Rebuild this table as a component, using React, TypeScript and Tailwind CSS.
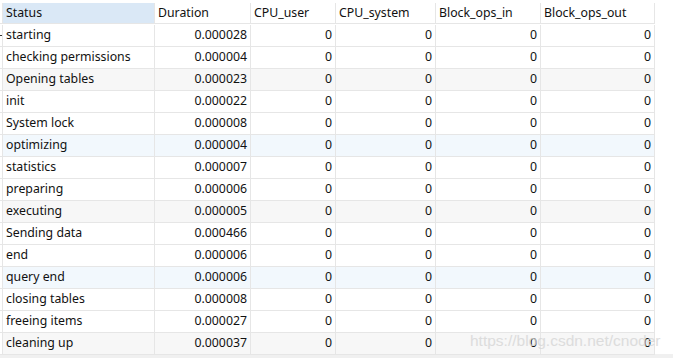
import React from 'react';

type Row = { status: string; duration: string; shade?: 'gray' | 'blue' };

const rows: Row[] = [
  { status: 'starting', duration: '0.000028' },
  { status: 'checking permissions', duration: '0.000004' },
  { status: 'Opening tables', duration: '0.000023', shade: 'gray' },
  { status: 'init', duration: '0.000022' },
  { status: 'System lock', duration: '0.000008' },
  { status: 'optimizing', duration: '0.000004', shade: 'blue' },
  { status: 'statistics', duration: '0.000007' },
  { status: 'preparing', duration: '0.000006' },
  { status: 'executing', duration: '0.000005', shade: 'gray' },
  { status: 'Sending data', duration: '0.000466' },
  { status: 'end', duration: '0.000006' },
  { status: 'query end', duration: '0.000006', shade: 'blue' },
  { status: 'closing tables', duration: '0.000008' },
  { status: 'freeing items', duration: '0.000027' },
  { status: 'cleaning up', duration: '0.000037', shade: 'gray' },
];

const headers = ['Duration', 'CPU_user', 'CPU_system', 'Block_ops_in', 'Block_ops_out'];

const cell = 'border-r border-b border-[#e6e6e6] px-[3px] flex items-center whitespace-nowrap overflow-hidden';

export default function App() {
  return (
    <div
      className="relative w-[673px] h-[358px] bg-white text-[12.3px] text-[#111] overflow-hidden"
      style={{ fontFamily: '"Noto Sans", "Noto Sans CJK SC", sans-serif' }}
    >
      <div className="pt-[3px] h-[354px]">
        <div className="grid grid-cols-[3px_152px_96px_85px_100px_105px_114px] auto-rows-[22px] w-[655px] [&>div]:box-border">
          {/* header */}
          <div className="border-r border-b border-[#e6e6e6] h-[21px]" />
          <div className={`${cell} h-[21px] bg-[#dae8f6]`}>Status</div>
          {headers.map((h) => (
            <div key={h} className={`${cell} h-[21px]`}>{h}</div>
          ))}

          {rows.map((r, i) => {
            const bg = r.shade === 'gray' ? 'bg-[#f7f7f7]' : r.shade === 'blue' ? 'bg-[#f2f8fd]' : 'bg-white';
            return (
              <React.Fragment key={r.status}>
                <div className="border-r border-b border-[#e6e6e6] flex items-center">
                  {i === 0 && <div className="w-[2px] h-[1px] bg-[#333]" />}
                </div>
                <div className={`${cell} ${bg}`}>{r.status}</div>
                <div className={`${cell} ${bg} justify-end`}>{r.duration}</div>
                <div className={`${cell} ${bg} justify-end`}>0</div>
                <div className={`${cell} ${bg} justify-end`}>0</div>
                <div className={`${cell} ${bg} justify-end`}>0</div>
                <div className={`${cell} ${bg} justify-end`}>0</div>
              </React.Fragment>
            );
          })}
        </div>
      </div>
      <div className="h-[4px] bg-[#f0f0f0]" />

      <div
        className="pointer-events-none absolute left-[470px] top-[332px] text-[15.5px] leading-[18px] text-[#d6d6d6] opacity-80 whitespace-nowrap"
        style={{ fontFamily: '"Liberation Sans", Arial, sans-serif' }}
      >
        https://blog.csdn.net/cnoder
      </div>
    </div>
  );
}
